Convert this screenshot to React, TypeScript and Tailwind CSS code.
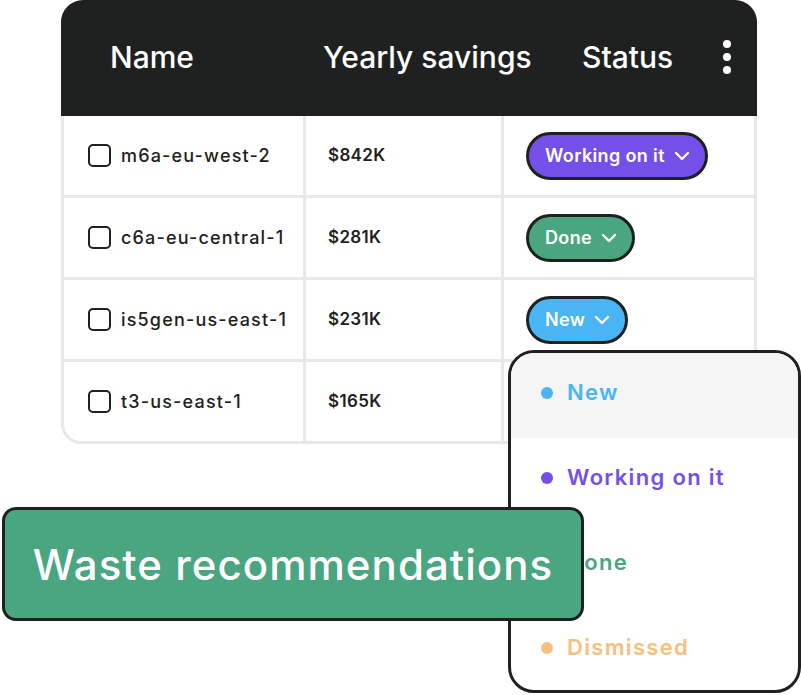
import React from 'react';

type Row = { name: string; savings: string; status: 'working' | 'done' | 'new' | null };

const rows: Row[] = [
  { name: 'm6a-eu-west-2', savings: '$842K', status: 'working' },
  { name: 'c6a-eu-central-1', savings: '$281K', status: 'done' },
  { name: 'is5gen-us-east-1', savings: '$231K', status: 'new' },
  { name: 't3-us-east-1', savings: '$165K', status: null },
];

const pillStyles = {
  working: { label: 'Working on it', cls: 'bg-[#7450e8]' },
  done: { label: 'Done', cls: 'bg-[#4aa680]' },
  new: { label: 'New', cls: 'bg-[#4ab5f5]' },
} as const;

const menuItems = [
  { label: 'New', text: 'text-[#4ab5f5]', dot: 'bg-[#4ab5f5]', active: true },
  { label: 'Working on it', text: 'text-[#7450e8]', dot: 'bg-[#7450e8]', active: false },
  { label: 'Done', text: 'text-[#4aa680]', dot: 'bg-[#4aa680]', active: false },
  { label: 'Dismissed', text: 'text-[#f6c07c]', dot: 'bg-[#f6c07c]', active: false },
];

function Chevron() {
  return (
    <svg width="16" height="10" viewBox="0 0 16 10" fill="none">
      <path d="M2 2l6 6 6-6" stroke="white" strokeWidth="2.4" strokeLinecap="round" strokeLinejoin="round" />
    </svg>
  );
}

function StatusPill({ status }: { status: 'working' | 'done' | 'new' }) {
  const p = pillStyles[status];
  return (
    <div
      className={`${p.cls} h-[48px] inline-flex items-center gap-[9px] pl-[16px] pr-[15px] rounded-full border-[3px] border-[#1e2120] text-white text-[18px] tracking-[0.02em] font-semibold`}
    >
      <span>{p.label}</span>
      <Chevron />
    </div>
  );
}

export default function App() {
  return (
    <div
      className="relative w-[801px] h-[695px] bg-white overflow-hidden"
      style={{ fontFamily: 'Inter, "Open Sans", sans-serif' }}
    >
      {/* Table card */}
      <div className="ml-[61px] w-[696px]">
        <div className="h-[116px] bg-[#1e2120] rounded-t-[22px] flex items-center text-white text-[30px] font-medium pb-[2px]">
          <div className="w-[242px] pl-[49px]">Name</div>
          <div className="w-[279px] pl-[20px]">Yearly savings</div>
          <div className="flex-1 pl-[0px]">Status</div>
          <div className="w-[57px] flex flex-col items-center gap-[5px] pr-[4px]">
            <span className="w-[8px] h-[8px] rounded-full bg-white" />
            <span className="w-[8px] h-[8px] rounded-full bg-white" />
            <span className="w-[8px] h-[8px] rounded-full bg-white" />
          </div>
        </div>
        <div className="grid grid-cols-[239px_195px_1fr] gap-[3px] bg-[#e8e8e8] border-x-[3px] border-b-[3px] border-[#e8e8e8] rounded-b-[20px] overflow-hidden">
          {rows.map((r) => (
            <React.Fragment key={r.name}>
              <div className="h-[79px] bg-white flex items-center pl-[24px] gap-[10px] text-[18px] tracking-[0.065em] font-medium text-[#1e2120]">
                <span className="w-[23px] h-[23px] rounded-[5px] border-[2.5px] border-[#1e2120]" />
                <span>{r.name}</span>
              </div>
              <div className="h-[79px] bg-white flex items-center pl-[22px] text-[17px] tracking-[0.02em] font-semibold text-[#1e2120]">
                {r.savings}
              </div>
              <div className="h-[79px] bg-white flex items-center pl-[22px]">
                {r.status && <StatusPill status={r.status} />}
              </div>
            </React.Fragment>
          ))}
        </div>
      </div>

      {/* Status dropdown menu */}
      <div className="absolute left-[508px] top-[350px] w-[293px] h-[343px] bg-white border-[3px] border-[#1e2120] rounded-[26px] overflow-hidden">
        {menuItems.map((m) => (
          <div
            key={m.label}
            className={`h-[85px] flex items-center pl-[30px] pb-[6px] gap-[14px] ${m.active ? 'bg-[#f5f5f5]' : ''}`}
          >
            <span className={`w-[12px] h-[12px] rounded-full ${m.dot}`} />
            <span className={`text-[22px] tracking-[0.06em] font-semibold ${m.text}`}>{m.label}</span>
          </div>
        ))}
      </div>

      {/* Label badge */}
      <div className="absolute left-[2px] top-[507px] w-[582px] h-[114px] bg-[#4aa680] border-[3px] border-[#1e2120] rounded-[14px] flex items-center justify-center text-white text-[42px] tracking-[0.025em] font-medium">
        Waste recommendations
      </div>
    </div>
  );
}
